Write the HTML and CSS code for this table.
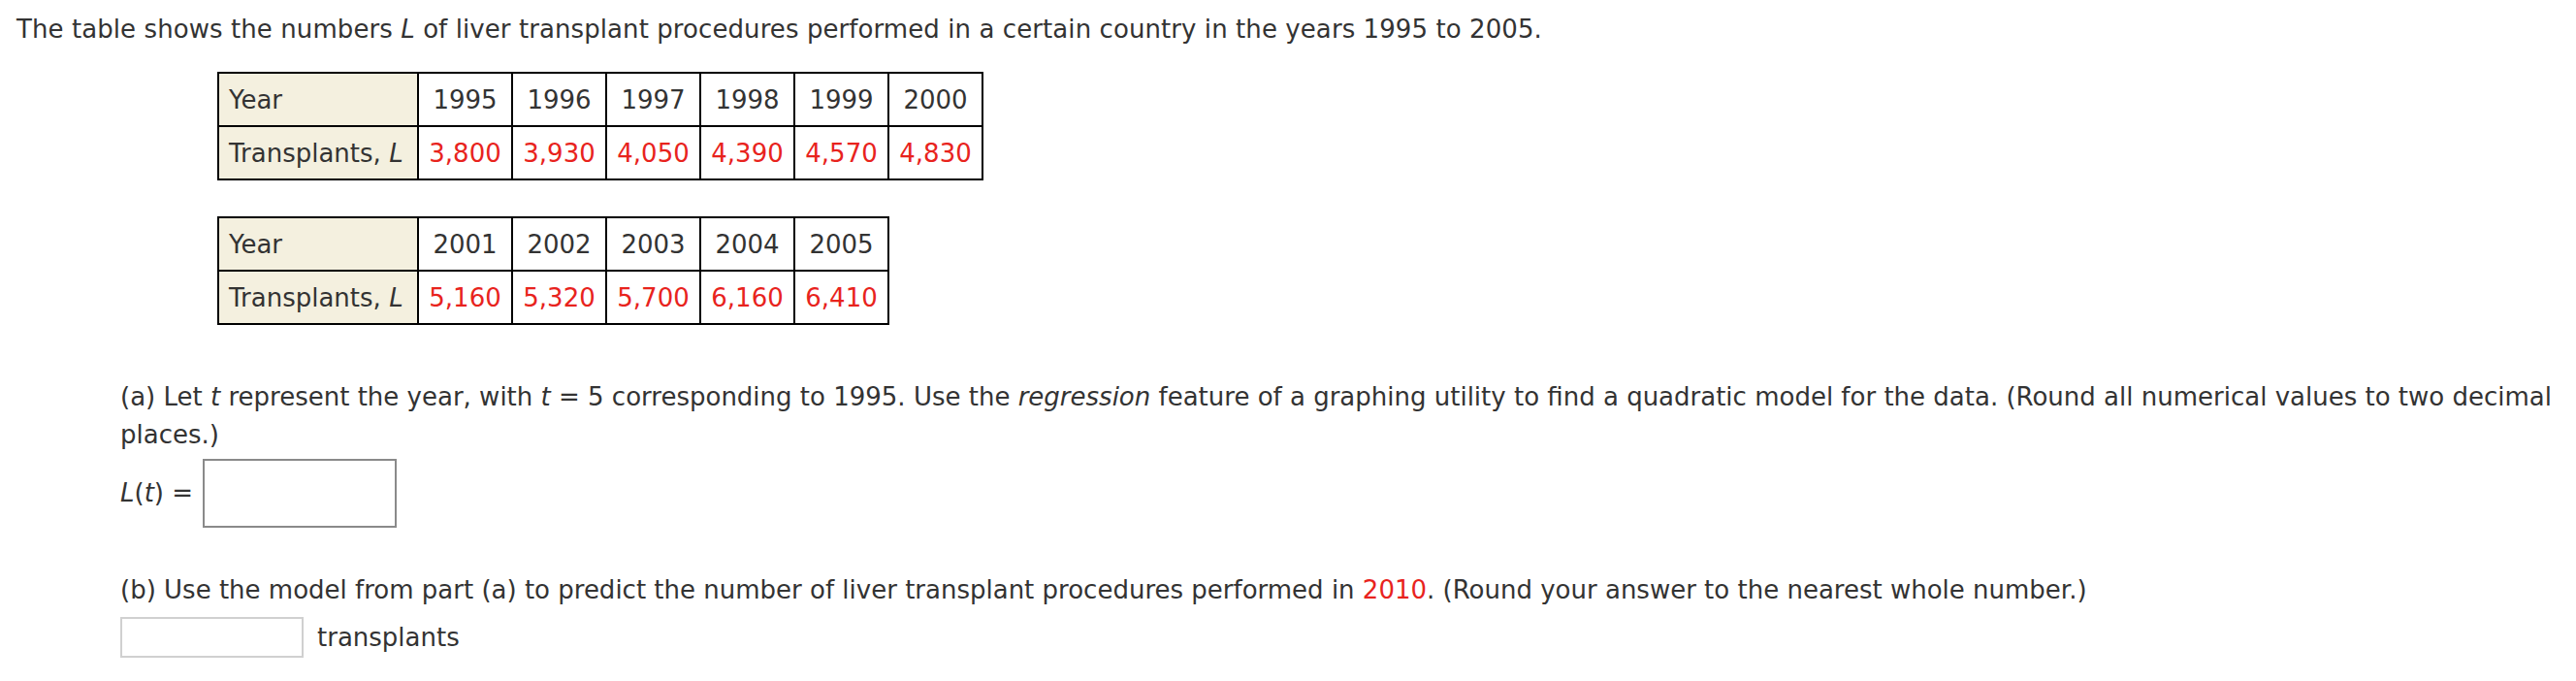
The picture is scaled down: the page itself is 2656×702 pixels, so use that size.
FILE: index.html
```html
<!DOCTYPE html>
<html>
<head>
<meta charset="utf-8">
<link rel="stylesheet" href="styles.css">
</head>
<body>
<div class="page">
  <p class="intro">The table shows the numbers <i>L</i> of liver transplant procedures performed in a certain country in the years 1995 to 2005.</p>

  <table class="data first">
    <tr><th class="rowhead">Year</th><td>1995</td><td>1996</td><td>1997</td><td>1998</td><td>1999</td><td>2000</td></tr>
    <tr><th class="rowhead">Transplants, <i>L</i></th><td class="red">3,800</td><td class="red">3,930</td><td class="red">4,050</td><td class="red">4,390</td><td class="red">4,570</td><td class="red">4,830</td></tr>
  </table>

  <table class="data second">
    <tr><th class="rowhead">Year</th><td>2001</td><td>2002</td><td>2003</td><td>2004</td><td>2005</td></tr>
    <tr><th class="rowhead">Transplants, <i>L</i></th><td class="red">5,160</td><td class="red">5,320</td><td class="red">5,700</td><td class="red">6,160</td><td class="red">6,410</td></tr>
  </table>

  <div class="part part-a">
    <p class="question">(a) Let <i>t</i> represent the year, with <i>t</i> = 5 corresponding to 1995. Use the <i>regression</i> feature of a graphing utility to find a quadratic model for the data. (Round all numerical values to two decimal places.)</p>
    <div class="answer-row">
      <span class="label"><i>L</i>(<i>t</i>) =</span>
      <span class="box big"></span>
    </div>
  </div>

  <div class="part part-b">
    <p class="question">(b) Use the model from part (a) to predict the number of liver transplant procedures performed in <span class="red">2010</span>. (Round your answer to the nearest whole number.)</p>
    <div class="answer-row">
      <span class="box small"></span>
      <span class="unit">transplants</span>
    </div>
  </div>
</div>
</body>
</html>
```

FILE: styles.css
```css
html, body {
  margin: 0;
  padding: 0;
  background: #ffffff;
}

body {
  font-family: "DejaVu Sans", Verdana, sans-serif;
  font-size: 26px;
  line-height: 39px;
  color: #333333;
}

.page {
  padding: 11px 0 0 17px;
}

p {
  margin: 0;
}

.intro {
  letter-spacing: 0.08px;
}

.data {
  border-collapse: collapse;
  margin-left: 207px;
  border: 2px solid #000;
}

.data.first {
  margin-top: 24px;
}

.data.second {
  margin-top: 37px;
}

.data th,
.data td {
  border: 2px solid #000;
  height: 53px;
  padding: 0 10px;
  line-height: 30px;
  white-space: nowrap;
}

.data th.rowhead {
  background: #f4f0df;
  font-weight: normal;
  text-align: left;
  width: 184px;
}

.data td {
  text-align: center;
  width: 75px;
}

.red {
  color: #e8231d;
}

.part {
  margin-left: 107px;
}

.part-a {
  margin-top: 55px;
}

.part-b {
  margin-top: 45px;
}

.answer-row {
  display: flex;
  align-items: center;
  gap: 14px;
}

.part-a .answer-row {
  margin-top: 5px;
}

.part-b .answer-row {
  margin-top: 8px;
}

.box {
  display: inline-block;
  box-sizing: border-box;
  background: #fff;
}

.box.big {
  width: 200px;
  height: 71px;
  border: 2px solid #8a8a8a;
  margin-left: -4px;
}

.box.small {
  width: 189px;
  height: 42px;
  border: 2px solid #d0d0d0;
}
```
